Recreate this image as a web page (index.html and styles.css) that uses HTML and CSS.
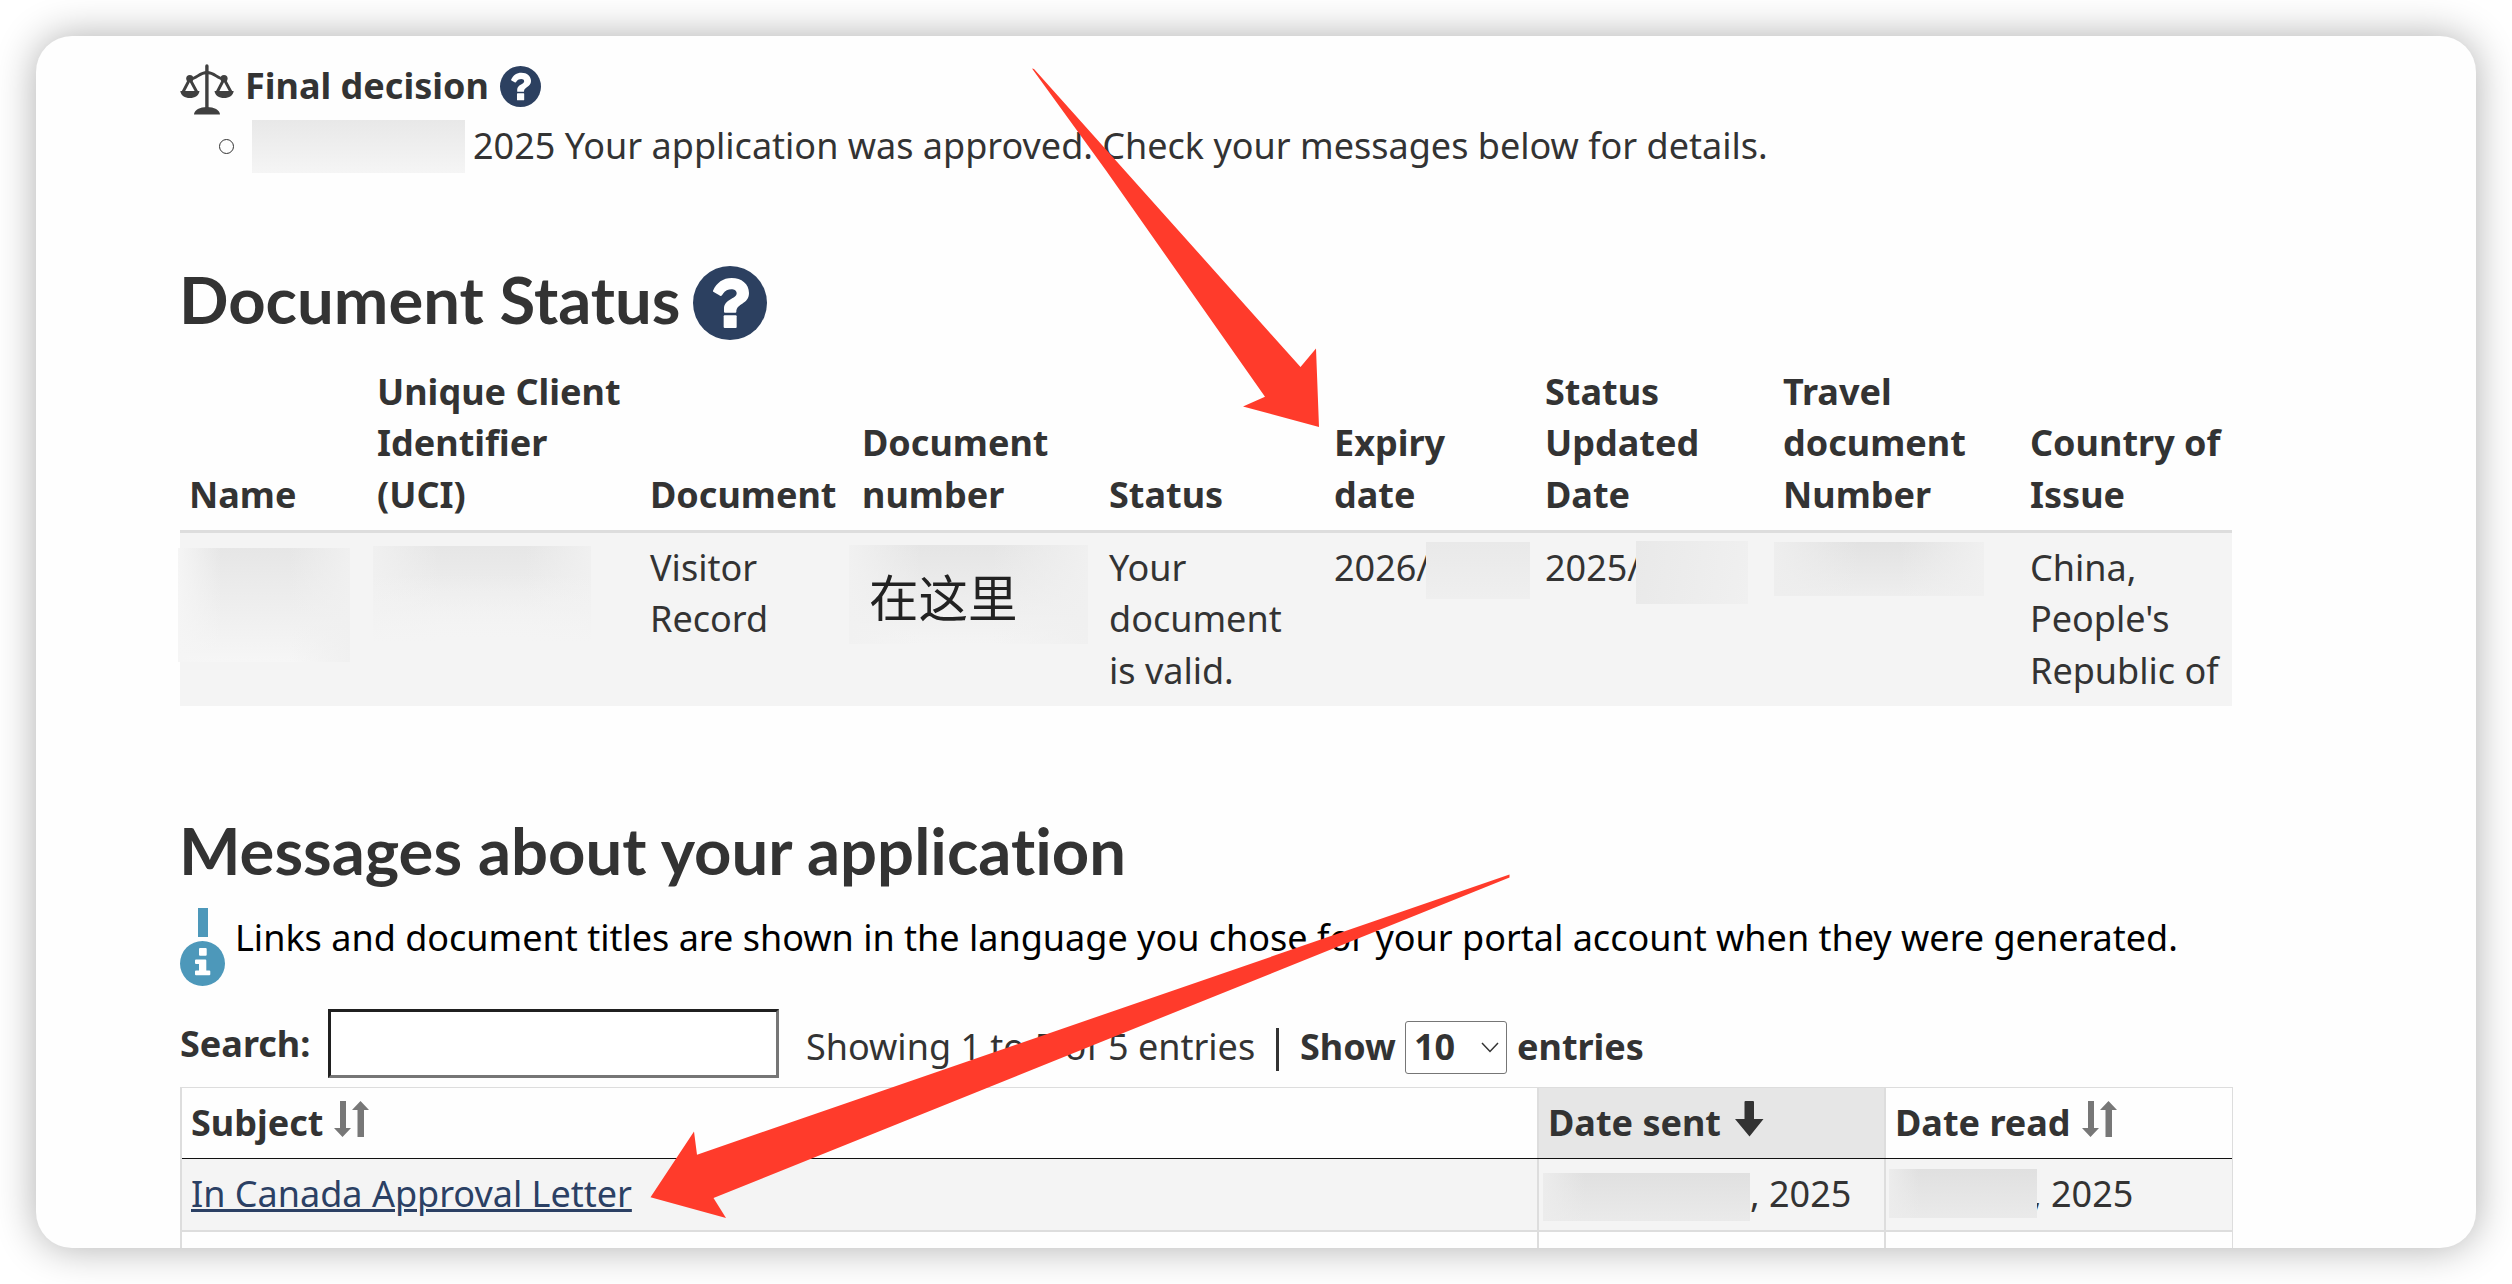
FILE: index.html
```html
<!DOCTYPE html>
<html lang="en">
<head>
<meta charset="utf-8">
<title>Application status</title>
<link rel="stylesheet" href="styles.css">
</head>
<body>
<svg class="defs" aria-hidden="true">
  <symbol id="help" viewBox="0 0 222 222">
    <circle cx="111" cy="111" r="111" fill="#2c4060"/>
    <path d="M60 74C71 50 90 36 116 36C146 36 168 54 168 81C168 115 130 112 130 137Q130 140 127 140H96Q93 140 93 137V129C93 98 131 100 131 82C131 66 101 66 90 83Q85 93 79 88L62 78Q59 76 60 74Z" fill="#fff"/>
    <rect x="92" y="148" width="39" height="38" rx="3" fill="#fff"/>
  </symbol>
  <symbol id="sort" viewBox="0 0 35 36">
    <path d="M6 0h6v27h5L8.500 36L0 27h6zM24 36h6V9h5L26.500 0L18 9h5.500V36z" fill="#777"/>
  </symbol>
</svg>
<main class="card">
  <section class="decision">
    <div class="decision-title">
      <svg class="scales" viewBox="0 0 54 52">
        <g fill="#404040">
          <path d="M25.200 2a1.700 1.700 0 0 1 3.400 0V44h-3.400z"/>
          <path d="M14 50.500C14 46 20 43 27 43S40 46 40 50.500z"/>
          <circle cx="9.800" cy="14.500" r="3.600"/><circle cx="44" cy="14.500" r="3.600"/>
          <path d="M.300 27H19.500C19 31.500 15 34 9.900 34S.800 31.500 .300 27zM34.500 27H53.700C53.200 31.500 49.200 34 44.100 34S35 31.500 34.500 27z"/>
        </g>
        <path d="M10 15C17 15 19 8.500 27 8.500S37 15 44 15M9.800 15L3 28M9.800 15L16.800 28M44 15L37.200 28M44 15L51 28" fill="none" stroke="#404040" stroke-width="2.900"/>
      </svg>
      <strong>Final decision</strong>
      <svg class="help-small"><use href="#help"/></svg>
    </div>
    <div class="decision-item">
      <span class="bullet"></span>
      <span class="mask mask-decision"></span>
      <span class="decision-text">2025 Your application was approved. Check your messages below for details.</span>
    </div>
  </section>

  <h2 class="status-heading"><span>Document Status</span><svg class="help-big"><use href="#help"/></svg></h2>
  <div class="doc-row doc-head">
    <div>Name</div>
    <div>Unique Client<br>Identifier<br>(UCI)</div>
    <div>Document</div>
    <div>Document<br>number</div>
    <div>Status</div>
    <div>Expiry<br>date</div>
    <div>Status<br>Updated<br>Date</div>
    <div>Travel<br>document<br>Number</div>
    <div>Country of<br>Issue</div>
  </div>
  <div class="doc-row doc-body">
    <div><span class="mask over mask-name"></span></div>
    <div><span class="mask over mask-uci"></span></div>
    <div>Visitor<br>Record</div>
    <div><span class="mask over mask-number">在这里</span></div>
    <div>Your<br>document<br>is valid.</div>
    <div>2026/<span class="mask over mask-expiry"></span></div>
    <div>2025/<span class="mask over mask-updated"></span></div>
    <div><span class="mask over mask-travel"></span></div>
    <div>China,<br>People's<br>Republic of</div>
  </div>

  <h2 class="messages-heading">Messages about your application</h2>
  <div class="notice">
    <svg class="info" viewBox="0 0 45 78">
      <path d="M18 0h10v29H18z" fill="#4d98ba"/>
      <circle cx="22.500" cy="55.500" r="22.500" fill="#4d98ba"/>
      <path d="M20 40h5.700q1 0 1 1v5.700q0 1-1 1H20q-1 0-1-1V41q0-1 1-1zM16 51.500H25.300q1 0 1 1V62.500H29.300q1 0 1 1v2.800q0 1-1 1H16q-1 0-1-1V63.500q0-1 1-1h3V56H16q-1 0-1-1v-2.500q0-1 1-1z" fill="#fff"/>
    </svg>
    <p>Links and document titles are shown in the language you chose for your portal account when they were generated.</p>
  </div>

  <div class="controls">
    <strong class="search-label">Search:</strong>
    <span class="search-box"></span>
    <span class="count">Showing 1 to 5 of 5 entries</span>
    <span class="divider"></span>
    <strong class="show">Show</strong>
    <span class="select">10<svg viewBox="0 0 18 11"><path d="M1 1l8 8.500L17 1" fill="none" stroke="#333" stroke-width="1.500"/></svg></span>
    <strong class="entries">entries</strong>
  </div>

  <div class="messages">
    <div class="msg-row msg-head">
      <div>Subject<svg class="sort"><use href="#sort"/></svg></div>
      <div class="sorted">Date sent<svg class="sort-down" viewBox="0 0 29 36"><path d="M9.500 1q0-1 1-1h7.500q1 0 1 1V18h9.500L14.500 35.500L0 18h9.500z" fill="#333"/></svg></div>
      <div>Date read<svg class="sort"><use href="#sort"/></svg></div>
    </div>
    <div class="msg-row msg-item">
      <div><a class="letter">In Canada Approval Letter</a></div>
      <div class="date-sent"><span class="mask"></span>, 2025</div>
      <div class="date-read"><span>, 2025</span><span class="mask over"></span></div>
    </div>
    <div class="msg-row msg-next"><div></div><div></div><div></div></div>
  </div>
</main>
<svg class="arrows" viewBox="0 0 2512 1284" aria-hidden="true">
  <path d="M1032 68.500L1034 69L1300.500 367L1316 348.500L1319 427L1243 406.500L1265 396.700L1106 170.500Z" fill="#ff3b2b"/>
  <path d="M1509.500 874.500V877.500L713.500 1198L726 1218L650.500 1197.200L694 1131.500L697 1154.700Z" fill="#ff3b2b"/>
</svg>
</body>
</html>
```
FILE: styles.css
```css
* { box-sizing: border-box; }

body {
  margin: 0;
  width: 2512px;
  height: 1284px;
  padding: 36px;
  overflow: hidden;
  position: relative;
  background: #fff;
  color: #333;
  font: 36px/51.43px "Noto Sans", "Noto Sans CJK SC", sans-serif;
}

svg { display: block; flex: none; }
.defs { position: absolute; width: 0; height: 0; }

.card {
  width: 2440px;
  height: 1212px;
  padding: 23px 244px 0 144px;
  border-radius: 36px;
  overflow: hidden;
  background: #fefefe;
  box-shadow: 0 0 40px rgba(0, 0, 0, .32);
}

.mask { display: block; flex: none; background: linear-gradient(#e8e8e8, #f5f5f5); }
.over { position: absolute; }

.decision { height: 207px; }
.decision-title { display: flex; height: 60px; }
.decision-title strong { margin-top: 1px; }
.scales { width: 54px; height: 52px; margin: 5px 11px 0 0; }
.help-small { width: 41px; height: 41px; margin: 7px 0 0 11px; }
.decision-item { display: flex; }
.decision-text { margin-top: 1px; }
.bullet {
  width: 15px;
  height: 15px;
  margin: 20px 25px 0 39px;
  border: 1.500px solid #333;
  border-radius: 50%;
}
.mask-decision { width: 213px; height: 53px; margin: 1px 8px 0 -7px; }

h2 { margin: 0; font: 700 65.200px/72px Lato, sans-serif; font-variant-ligatures: none; }
.status-heading { display: flex; height: 90px; }
.status-heading span { width: 500px; margin: -3px 0 0 -1px; white-space: nowrap; }
.help-big { width: 74px; height: 74px; margin-left: 14px; }

.doc-row {
  display: grid;
  grid-template-columns: 188px 273px 212px 246px 225px 211px 238px 247px 212px;
}
.doc-row > div { position: relative; padding: 0 9px; white-space: nowrap; }
.doc-row > div:nth-child(n + 5) { padding-left: 10px; }
.doc-head {
  align-items: end;
  height: 177px;
  padding-bottom: 10px;
  border-bottom: 3px solid #ddd;
  font-weight: 700;
}
.doc-body { height: 173px; padding-top: 9px; background: #f4f4f4; }
.mask-name { left: -2px; top: 6px; width: 172px; height: 114px; background: linear-gradient(90deg, #f5f5f5, transparent 25%, transparent 65%, #f0f0f0), linear-gradient(#e6e6e6, #f6f6f6); }
.mask-uci { left: 5px; top: 4px; width: 218px; height: 96px; background: linear-gradient(transparent 30%, #f4f4f4), linear-gradient(90deg, #f0f0f0, transparent 30%, transparent 70%, #f0f0f0), linear-gradient(#e6e6e6, #f4f4f4); }
.mask-number {
  left: -4px;
  top: 3px;
  width: 239px;
  height: 99px;
  padding-left: 20px;
  background: linear-gradient(90deg, #f1f1f1, transparent 30%, transparent 60%, #f0f0f0), linear-gradient(#e5e5e5, #f4f4f4);
  color: #222;
  font: 49.500px/101px "Noto Sans CJK SC", sans-serif;
}
.mask-expiry { left: 102px; top: 0; width: 104px; height: 57px; background: linear-gradient(#e9e9e9, #efefef); }
.mask-updated { left: 101px; top: -1px; width: 112px; height: 63px; background: linear-gradient(100deg, #e9e9e9, #f0f0f0); }
.mask-travel { left: 1px; top: 0; width: 210px; height: 54px; background: linear-gradient(90deg, #eee, transparent 40%, transparent 60%, #f0f0f0), linear-gradient(#e2e2e2, #eee); }

.messages-heading { margin: 108px 0 0 -1px; height: 94px; }
.notice { display: flex; height: 101px; color: #000; }
.info { width: 45px; height: 78px; }
.notice p { margin: 4px 0 0 10px; white-space: nowrap; }

.controls { display: flex; height: 78px; white-space: nowrap; }
.search-label { margin-top: 9px; width: 148px; }
.search-box {
  width: 451px;
  height: 69px;
  border: 3px solid;
  border-color: #202020 #767676 #767676 #202020;
  background: #fff;
}
.count { margin: 12px 0 0 27px; width: 470px; }
.divider { width: 3px; height: 43px; margin-top: 19px; background: #333; }
.show { margin: 12px 0 0 21px; width: 105px; }
.select {
  display: flex;
  justify-content: space-between;
  width: 102px;
  height: 53px;
  margin-top: 12px;
  padding: 0 7px 0 8px;
  border: 1px solid #767676;
  border-radius: 3px;
  background: #fff;
  font-weight: 700;
  line-height: 50px;
}
.select svg { width: 18px; height: 11px; margin-top: 20px; }
.entries { margin: 12px 0 0 10px; }

.messages { border: solid #ddd; border-width: 1px 1px 0 2px; width: 2053px; }
.msg-row { display: grid; grid-template-columns: 1355px 347px 348px; }
.msg-row > div { position: relative; display: flex; padding-left: 9px; white-space: nowrap; }
.msg-row > div + div { border-left: 2px solid #ddd; }
.msg-head { height: 71px; border-bottom: 1px solid #111; font-weight: 700; }
.msg-head > div { padding-top: 9px; }
.msg-head .sorted { background: #e6e6e6; }
.sort { width: 35px; height: 36px; margin: 4px 0 0 11px; }
.sort-down { width: 29px; height: 36px; margin: 4px 0 0 14px; }
.msg-item { height: 73px; border-bottom: 2px solid #ddd; background: #f4f4f4; }
.msg-item > div { padding-top: 9px; }
.letter {
  color: #2b4064;
  text-decoration: underline;
  text-decoration-thickness: 3px;
}
.msg-item .mask { background: linear-gradient(90deg, #ececec, transparent 20%), linear-gradient(#e0e0e0, #eaeaea); }
.msg-item .date-sent { padding-left: 4px; }
.date-sent .mask { width: 207px; height: 48px; margin: 5px 0 0; }
.msg-item .date-read { padding-left: 146px; }
.date-read .mask { left: 3px; top: 10px; width: 148px; height: 49px; }
.msg-next { height: 60px; }

.arrows { position: absolute; left: 0; top: 0; width: 2512px; height: 1284px; pointer-events: none; }
```
